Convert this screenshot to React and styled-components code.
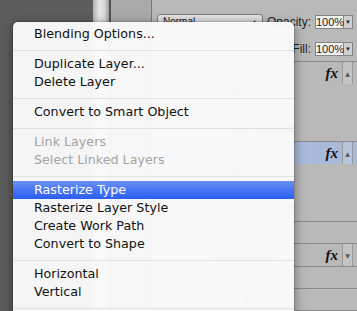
import styled, { createGlobalStyle } from "styled-components";

const Global = createGlobalStyle`
  html, body {
    margin: 0;
    padding: 0;
    background: #5d5d5d;
    overflow: hidden;
  }
`;

const Screen = styled.div`
  position: relative;
  display: flex;
  width: 357px;
  height: 311px;
  overflow: hidden;
  font-family: "DejaVu Sans", "Liberation Sans", sans-serif;
`;

const Dock = styled.div`
  width: 93px;
  background: #5d5d5d;
`;

const Scroller = styled.div`
  width: 16px;
  background: linear-gradient(to right, #b4b4b4, #e6e6e6 40%, #d8d8d8 70%, #a0a0a0);
  border-right: 2px solid #545454;
`;

const Column = styled.div`
  width: 40px;
  background: #a9a9a9;
  border-right: 1px solid #777;
`;

const Panel = styled.div`
  flex: 1;
  display: flex;
  flex-direction: column;
  background: #b9b9b9;
  padding-top: 14px;
`;

const OptionRow = styled.div`
  display: flex;
  align-items: center;
  height: 17px;
  padding: 0 4px 0 5px;
  margin-top: ${(p) => p.$top || 0}px;
  font-family: "Liberation Sans", sans-serif;
  font-size: 12px;
  color: #1e1e1e;
`;

const BlendSelect = styled.div`
  width: 106px;
  height: 16px;
  box-sizing: border-box;
  border: 1px solid #7c7c7c;
  border-radius: 3px;
  background: linear-gradient(#e4e4e4, #c9c9c9);
  font-size: 10px;
  padding: 1px 5px;
  display: flex;
  justify-content: space-between;
`;

const Label = styled.span`
  margin-left: auto;
  margin-right: 4px;
`;

const Field = styled.div`
  width: 29px;
  height: 14px;
  box-sizing: border-box;
  border: 1px solid #858585;
  background: #f1f1f1;
  font-size: 11px;
  line-height: 12px;
  text-align: center;
`;

const DropBtn = styled.div`
  width: 9px;
  height: 14px;
  box-sizing: border-box;
  border: 1px solid #858585;
  border-left: none;
  background: #cfcfcf;
  font-size: 6px;
  line-height: 12px;
  text-align: center;
`;

const Layers = styled.div`
  margin-top: 5px;
  border-top: 1px solid #8a8a8a;
`;

const Group = styled.div`
  height: ${(p) => p.$h}px;
  border-bottom: 1px solid #8a8a8a;
  box-sizing: border-box;
`;

const Head = styled.div`
  display: flex;
  align-items: center;
  height: 22px;
  background: ${(p) => (p.$selected ? "#a9b9d9" : "transparent")};
  font-size: 10px;
  color: #555;
  padding-left: 60px;
`;

const Fx = styled.span`
  margin-left: auto;
  margin-right: 4px;
  font-family: "Liberation Serif", serif;
  font-style: italic;
  font-weight: bold;
  font-size: 15px;
  color: #111;
`;

const ArrowCol = styled.div`
  width: 9px;
  height: 100%;
  background: ${(p) => (p.$selected ? "#b9c5dd" : "#c4c4c4")};
  border-left: 1px solid #999;
  border-right: 1px solid #999;
  font-size: 6px;
  display: flex;
  align-items: center;
  justify-content: center;
  margin-right: 4px;
`;

const Effect = styled.div`
  height: 18px;
  padding-left: 76px;
  font-size: 10px;
  color: #666;
  line-height: 18px;
`;

const Menu = styled.div`
  position: absolute;
  left: 13px;
  top: 22px;
  width: 281px;
  height: 300px;
  padding-top: 3px;
  box-sizing: border-box;
  background: rgba(250, 250, 250, 0.97);
  border-radius: 5px 5px 0 0;
  box-shadow: 0 3px 12px rgba(0, 0, 0, 0.45), 0 0 0 1px rgba(0, 0, 0, 0.1);
`;

const Item = styled.div`
  height: 18px;
  line-height: 18px;
  padding-left: 21px;
  font-size: 12.7px;
  color: ${(p) => (p.$disabled ? "#a4a4a4" : p.$active ? "#fff" : "#111")};
  background: ${(p) =>
    p.$active ? "linear-gradient(#6a8ff4, #2a5ef2)" : "transparent"};
  white-space: nowrap;
`;

const Sep = styled.div`
  height: 12px;
  padding-top: 7px;
  box-sizing: border-box;
  &::after {
    content: "";
    display: block;
    height: 1px;
    background: #e2e2e2;
  }
`;

const menu = [
  ["Blending Options..."],
  "-",
  ["Duplicate Layer..."],
  ["Delete Layer"],
  "-",
  ["Convert to Smart Object"],
  "-",
  ["Link Layers", "disabled"],
  ["Select Linked Layers", "disabled"],
  "-",
  ["Rasterize Type", "active"],
  ["Rasterize Layer Style"],
  ["Create Work Path"],
  ["Convert to Shape"],
  "-",
  ["Horizontal"],
  ["Vertical"],
  "-",
];

export default function App() {
  return (
    <Screen>
      <Global />
      <Dock />
      <Scroller />
      <Column />
      <Panel>
        <OptionRow>
          <BlendSelect>
            <span>Normal</span>
            <span>▴</span>
          </BlendSelect>
          <Label>Opacity:</Label>
          <Field>100%</Field>
          <DropBtn>▼</DropBtn>
        </OptionRow>
        <OptionRow $top={12}>
          <Label>Fill:</Label>
          <Field>100%</Field>
          <DropBtn>▼</DropBtn>
        </OptionRow>
        <Layers>
          <Group $h={80}>
            <Head>
              WORD
              <Fx>fx</Fx>
              <ArrowCol>▲</ArrowCol>
            </Head>
            <Effect>Effects</Effect>
            <Effect>Outer Glow</Effect>
            <Effect>Drop Shadow</Effect>
          </Group>
          <Group $h={80}>
            <Head $selected>
              CROSS
              <Fx>fx</Fx>
              <ArrowCol $selected>▲</ArrowCol>
            </Head>
            <Effect>Effects</Effect>
            <Effect>Outer Glow</Effect>
            <Effect>Drop Shadow</Effect>
          </Group>
          <Group $h={22}>
            <Head>WORD copy</Head>
          </Group>
          <Group $h={23}>
            <Head>
              CROSS copy
              <Fx>fx</Fx>
              <ArrowCol>▼</ArrowCol>
            </Head>
          </Group>
          <Group $h={22}>
            <Head>Layer 1 copy 3</Head>
          </Group>
          <Group $h={22}>
            <Head>Layer 1 copy</Head>
          </Group>
        </Layers>
      </Panel>
      <Menu>
        {menu.map((m, i) =>
          m === "-" ? (
            <Sep key={i} />
          ) : (
            <Item
              key={i}
              $disabled={m[1] === "disabled"}
              $active={m[1] === "active"}
            >
              {m[0]}
            </Item>
          )
        )}
      </Menu>
    </Screen>
  );
}
